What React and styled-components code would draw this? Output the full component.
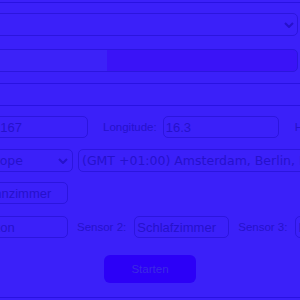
import React from "react";
import styled, { createGlobalStyle } from "styled-components";

const c = {
  bg: "#3b20f9",
  line: "#2912e2",
  border: "#2c15de",
  text: "#2611cc",
  track: "#3a13f7",
  fill: "#3c22f8",
  btn: "#2c00f7",
  btnText: "#3b2ae4",
};

const Global = createGlobalStyle`
  html, body {
    margin: 0;
    background: ${c.bg};
    overflow: hidden;
  }
`;

const Page = styled.div`
  width: 300px;
  height: 300px;
  overflow: hidden;
  box-sizing: border-box;
  padding-top: 2px;
`;

const Panel = styled.section`
  border-top: ${(p) => (p.$top ? `1px solid ${c.line}` : "none")};
  border-bottom: ${(p) => (p.$bottom ? `1px solid ${c.line}` : "none")};
  padding: ${(p) => p.$pad || "0"};
  height: ${(p) => (p.$h ? `${p.$h}px` : "auto")};
`;

const Row = styled.div`
  display: flex;
  align-items: center;
  width: max-content;
  white-space: nowrap;
  margin-left: ${(p) => p.$offset || 0}px;
  margin-top: ${(p) => p.$mt || 0}px;
`;

const SelectWrap = styled.div`
  position: relative;
  width: ${(p) => p.$w}px;
  margin-left: ${(p) => p.$ml || 0}px;
  flex-shrink: 0;
`;

const Select = styled.select`
  appearance: none;
  -webkit-appearance: none;
  display: block;
  box-sizing: border-box;
  width: 100%;
  height: 23px;
  border: 1px solid ${c.border};
  border-radius: 5px;
  background: transparent;
  color: ${c.text};
  font-family: "DejaVu Sans", sans-serif;
  font-size: 12.5px;
  padding: 0 18px 0 3px;
  outline: none;
`;

const Chevron = styled.svg`
  position: absolute;
  right: ${(p) => p.$r || 4}px;
  top: 50%;
  margin-top: -3px;
  width: 10px;
  height: 6px;
  pointer-events: none;
`;

const Track = styled.div`
  box-sizing: border-box;
  width: 348px;
  height: 23px;
  margin-left: -50px;
  margin-top: 13px;
  border: 1px solid ${c.border};
  border-radius: 5px;
  background: ${c.track};
  overflow: hidden;
`;

const Fill = styled.div`
  height: 100%;
  background: ${c.fill};
`;

const Input = styled.input`
  box-sizing: border-box;
  width: ${(p) => p.$w}px;
  height: 22px;
  border: 1px solid ${c.border};
  border-radius: 5px;
  background: transparent;
  color: ${c.text};
  font-family: "Liberation Sans", Arial, sans-serif;
  font-size: 13px;
  padding: 0 2px;
  outline: none;
  flex-shrink: 0;
`;

const Label = styled.label`
  font-family: "Liberation Sans", Arial, sans-serif;
  font-size: 11.5px;
  color: ${c.text};
  margin: 0 ${(p) => p.$mr || 8}px 0 ${(p) => p.$ml || 10}px;
`;

const ButtonRow = styled.div`
  display: flex;
  justify-content: center;
  margin-top: 17px;
`;

const StartButton = styled.button`
  width: 92px;
  height: 28px;
  border: none;
  border-radius: 6px;
  background: ${c.btn};
  color: ${c.btnText};
  font-family: "Liberation Sans", Arial, sans-serif;
  font-size: 11.5px;
  padding: 0;
`;

const Arrow = ({ right }) => (
  <Chevron $r={right} viewBox="0 0 10 6">
    <path d="M1 1 L5 5 L9 1" fill="none" stroke={c.text} strokeWidth="2" />
  </Chevron>
);

export default function App() {
  const progress = 45;
  return (
    <>
      <Global />
      <Page>
        <Panel $top $bottom $pad="10px 0 11px">
          <SelectWrap $w={348} $ml={-50}>
            <Select defaultValue="">
              <option value=""></option>
            </Select>
            <Arrow right={4} />
          </SelectWrap>
          <Track>
            <Fill style={{ width: `${progress}%` }} />
          </Track>
        </Panel>

        <Panel $h={21} />

        <Panel $top $bottom $pad="10px 0 14px">
          <Row $offset={-28}>
            <Input $w={116} defaultValue="48.2167" />
            <Label $ml={15} $mr={6}>Longitude:</Label>
            <Input $w={116} defaultValue="16.3" />
            <Label $ml={16} $mr={6}>Höhe:</Label>
            <Input $w={80} defaultValue="171" />
          </Row>

          <Row $offset={-25} $mt={11}>
            <SelectWrap $w={98}>
              <Select defaultValue="Europe">
                <option>Europe</option>
              </Select>
              <Arrow right={5} />
            </SelectWrap>
            <SelectWrap $w={300} $ml={5}>
              <Select defaultValue="ams">
                <option value="ams">(GMT +01:00) Amsterdam, Berlin, Bern, Rom, Wien</option>
              </Select>
            </SelectWrap>
          </Row>

          <Row $offset={-28} $mt={10}>
            <Input $w={96} defaultValue="Wohnzimmer" />
          </Row>

          <Row $offset={-28} $mt={12}>
            <Input $w={96} defaultValue="Balkon" />
            <Label $ml={9} $mr={8}>Sensor 2:</Label>
            <Input $w={95} defaultValue="Schlafzimmer" />
            <Label $ml={9} $mr={8}>Sensor 3:</Label>
            <Input $w={95} defaultValue="Küche" />
          </Row>

          <ButtonRow>
            <StartButton>Starten</StartButton>
          </ButtonRow>
        </Panel>
      </Page>
    </>
  );
}
